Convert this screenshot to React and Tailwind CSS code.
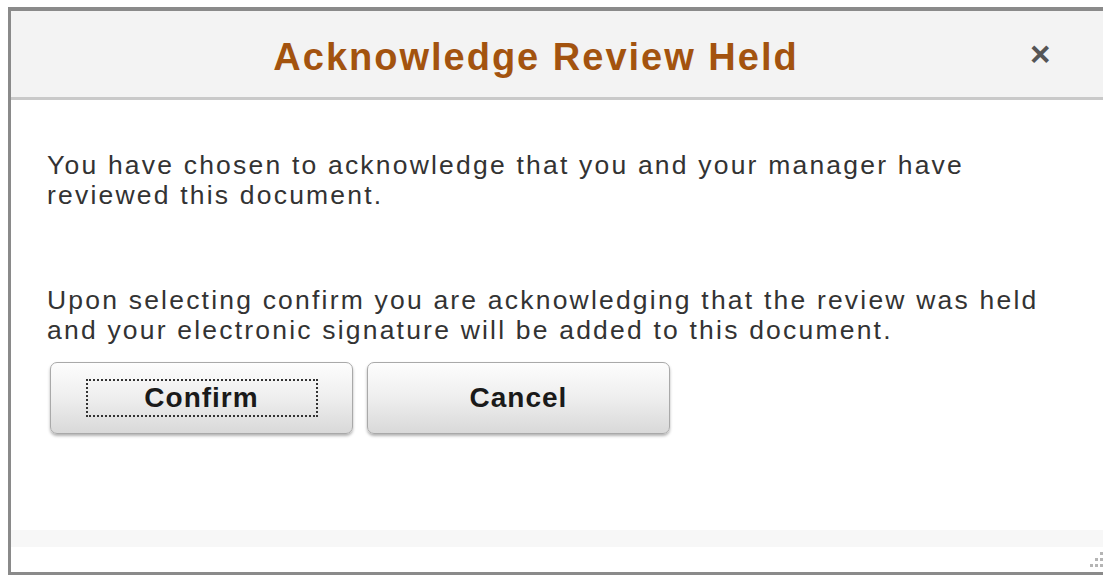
import React from 'react';

// modal: acknowledge review held
function DialogButton({ label, focused }) {
    return (
        <button
            type="button"
            className="w-[303px] h-[72px] rounded-[7px] border border-[#a9a9a9] bg-gradient-to-b from-[#fdfdfd] via-[#eeeeee] to-[#d9d9d9] shadow-[0_2px_3px_rgba(0,0,0,0.3)] flex items-center justify-center"
        >
            {focused ? (
                <span className="w-[232px] h-[38px] border-2 border-dotted border-[#333] flex items-center justify-center text-[28px] tracking-[1px] font-bold text-[#1a1a1a] leading-none">
                    {label}
                </span>
            ) : (
                <span className="text-[28px] tracking-[1px] font-bold text-[#1a1a1a] leading-none">{label}</span>
            )}
        </button>
    );
}

export default function App() {
    return (
        <div className="w-[1103px] h-[575px] bg-white pt-[7px] pl-[8px] font-['Liberation_Sans',Arial,sans-serif] overflow-hidden">
            <div className="w-[1110px] h-[568px] border-t-[4px] border-l-[3px] border-b-[3px] border-[#8a8a8a] flex flex-col">
                {/* header */}
                <div className="h-[89px] bg-[#f3f3f3] border-b-[3px] border-[#c9c9c9] flex items-center relative">
                    <h1 className="w-[1050px] text-center text-[38px] tracking-[2px] font-bold text-[#a3530f] leading-none pt-[6px]">
                        Acknowledge Review Held
                    </h1>
                    <span className="absolute left-[1019px] top-[25px] text-[35px] text-[#555] font-bold leading-none">×</span>
                </div>

                {/* body */}
                <div className="flex-1 bg-white px-[36px] pt-[50px] text-[26.5px] tracking-[2.2px] leading-[30px] text-[#333]">
                    <p>
                        You have chosen to acknowledge that you and your manager have
                        <br />
                        reviewed this document.
                    </p>
                    <p className="mt-[75px]">
                        Upon selecting confirm you are acknowledging that the review was held
                        <br />
                        and your electronic signature will be added to this document.
                    </p>
                    <div className="flex gap-[14px] mt-[17px] ml-[3px]">
                        <DialogButton label="Confirm" focused />
                        <DialogButton label="Cancel" />
                    </div>
                </div>

                {/* footer strip */}
                <div className="h-[42px] bg-white flex flex-col">
                    <div className="h-[17px] bg-[#f7f7f7]" />
                    <div className="flex-1 relative">
                        <svg className="absolute left-[1077px] top-[3px]" width="16" height="18" viewBox="0 0 16 18">
                            <rect x="12" y="2" width="3" height="3" fill="#b5b5b5" />
                            <rect x="7" y="8" width="3" height="3" fill="#b5b5b5" />
                            <rect x="12" y="8" width="3" height="3" fill="#b5b5b5" />
                            <rect x="2" y="14" width="3" height="3" fill="#b5b5b5" />
                            <rect x="7" y="14" width="3" height="3" fill="#b5b5b5" />
                            <rect x="12" y="14" width="3" height="3" fill="#b5b5b5" />
                        </svg>
                    </div>
                </div>
            </div>
        </div>
    );
}
